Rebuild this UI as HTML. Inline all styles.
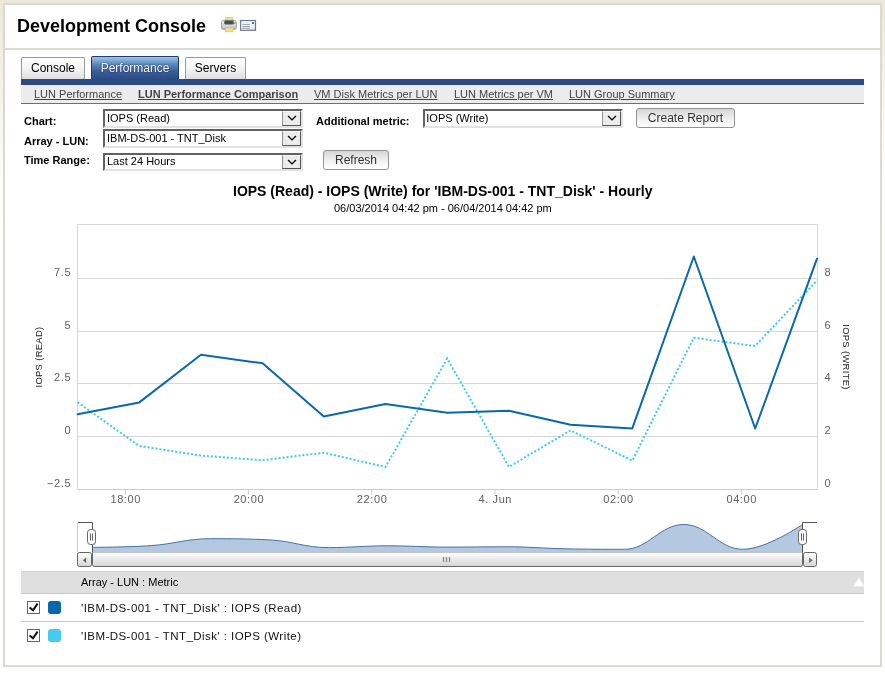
<!DOCTYPE html>
<html><head><meta charset="utf-8">
<style>
*{box-sizing:border-box;margin:0;padding:0}
html,body{width:885px;height:674px;overflow:hidden}
#wrap{position:absolute;left:0;top:0;width:885px;height:674px;will-change:transform}
body{position:relative;font-family:"Liberation Sans",sans-serif;background:linear-gradient(to bottom,#ebe8da 0px,#f3f1e8 80px,#fdfdfb 180px,#ffffff 240px);color:#000}
.a{position:absolute;white-space:nowrap}
#box{position:absolute;left:3px;top:3px;width:879px;height:664px;border:2px solid #dbdad2;background:#fff}
#hdrline{position:absolute;left:5px;top:48px;width:875px;height:2px;background:#dbdad2}
.title{left:17px;top:15px;font-size:18px;font-weight:bold;line-height:22px}
.tab{position:absolute;top:57px;height:22px;border:1px solid #9a9a9a;border-bottom:none;border-radius:2px 2px 0 0;background:linear-gradient(to bottom,#ffffff 0%,#f4f4f4 50%,#dedede 100%);font-size:12px;line-height:21px;text-align:center;color:#000}
.tab.on{top:56px;height:23px;line-height:23px;border-color:#1e3a6e;background:linear-gradient(to bottom,#9cc4e8 0%,#5a84bc 35%,#3a5e98 65%,#2d4c86 100%);color:#fff;text-shadow:0 0 1px #0f2448,0 0 1px #0f2448}
#bar{position:absolute;left:21px;top:79px;width:843px;height:6px;background:#2c4b84}
#sub{position:absolute;left:21px;top:85px;width:843px;height:19px;background:#ececec;border-bottom:1px solid #60718f}
.lnk{font-size:11px;color:#444;text-decoration:underline;top:88px;line-height:13px}
.lbl{font-size:11px;font-weight:bold;line-height:13px}
.sel{position:absolute;width:200px;height:19px;border:2px solid;border-color:#626262 #e2e2e2 #e2e2e2 #626262;background:#fff;font-size:11px;line-height:14px;padding-left:2px}
.sel .t{position:absolute;left:2px;top:0px}
.sel .b{position:absolute;right:0;top:0;width:19px;height:15px;background:#ececec;border-style:solid;border-width:1px;border-color:#f8f8f8 #555 #555 #909090}
.btn{position:absolute;height:20px;border:1px solid #939393;border-radius:3px;background:linear-gradient(to bottom,#d6d6d6 0%,#eeeeee 50%,#fafafa 80%,#ffffff 100%);font-size:12px;color:#333;text-align:center;line-height:18px}
.ct{font-size:14px;font-weight:bold;line-height:16px}
.cs{font-size:11px;line-height:13px}
.yl{font-size:11px;color:#606060;line-height:13px}
#lgh{position:absolute;left:21px;top:571px;width:843px;height:23px;background:#dfdfdf;border-top:1px solid #cfcfcf;border-bottom:1px solid #c8c8c8}
.sep{position:absolute;left:21px;top:621px;width:843px;height:1px;background:#c8c8c8}
.cb{position:absolute;width:13px;height:13px;border:1px solid #666;background:#fff}
.sw{position:absolute;width:13px;height:13px;border-radius:3px}
.lt{font-size:11.5px;line-height:14px;color:#111;letter-spacing:0.45px}
</style></head><body><div id="wrap">
<div id="box"></div>
<div id="hdrline"></div>
<div class="a title">Development Console</div>

<!-- icons -->
<svg class="a" style="left:220px;top:16px" width="40" height="18" viewBox="0 0 40 18">
  <defs><linearGradient id="pb" x1="0" y1="0" x2="0" y2="1"><stop offset="0" stop-color="#f2f2f5"/><stop offset="0.6" stop-color="#d4d7dd"/><stop offset="1" stop-color="#a9adb5"/></linearGradient>
  <linearGradient id="eg" x1="0" y1="0" x2="1" y2="1"><stop offset="0" stop-color="#ffffff"/><stop offset="0.6" stop-color="#fafafb"/><stop offset="1" stop-color="#d6d8dc"/></linearGradient></defs>
  <rect x="5.5" y="1.5" width="7.5" height="4" fill="#f5e18e" stroke="#e8c95e" stroke-width="0.8"/>
  <rect x="1.5" y="4.3" width="14.8" height="9.2" rx="2.2" fill="url(#pb)" stroke="#8d9199" stroke-width="0.8"/>
  <rect x="4.3" y="4.5" width="9.4" height="3.9" rx="1.2" fill="#4b4e54"/>
  <rect x="14" y="6" width="1.4" height="1" fill="#66cc66"/>
  <rect x="14" y="7" width="1.4" height="1" fill="#e07070"/>
  <rect x="5.5" y="12" width="7.5" height="3.8" fill="#f0e08e" stroke="#e2c560" stroke-width="0.8"/>
  <rect x="20.7" y="4.5" width="14.8" height="9.8" fill="url(#eg)" stroke="#6b7a92" stroke-width="1.2"/>
  <rect x="32" y="6" width="2" height="2" fill="#2f6ee6"/>
  <path d="M22.3 6.5 H30.5" stroke="#e6e9f0" stroke-width="0.8"/>
  <path d="M22.3 8.4 H30 M22.3 10.5 H30 M22.3 12.3 H30" stroke="#8e9299" stroke-width="0.9"/>
</svg>

<!-- tabs -->
<div class="tab" style="left:21px;width:64px">Console</div>
<div class="tab on" style="left:91px;width:88px">Performance</div>
<div class="tab" style="left:185px;width:61px">Servers</div>
<div id="bar"></div>
<div id="sub"></div>
<div class="a lnk" style="left:34px">LUN Performance</div>
<div class="a lnk" style="left:138px;font-weight:bold">LUN Performance Comparison</div>
<div class="a lnk" style="left:314px">VM Disk Metrics per LUN</div>
<div class="a lnk" style="left:454px">LUN Metrics per VM</div>
<div class="a lnk" style="left:569px">LUN Group Summary</div>

<!-- form -->
<div class="a lbl" style="left:24px;top:115px">Chart:</div>
<div class="a lbl" style="left:24px;top:135px">Array - LUN:</div>
<div class="a lbl" style="left:24px;top:154px">Time Range:</div>
<div class="sel" style="left:103px;top:109px"><span class="t">IOPS (Read)</span><span class="b"><svg style="position:absolute;left:4px;top:3px" width="10" height="8" viewBox="0 0 10 8"><path d="M1.1 1 L5 4.9 L8.9 1" stroke="#000" stroke-width="1.35" fill="none"/></svg></span></div>
<div class="sel" style="left:103px;top:129px"><span class="t">IBM-DS-001 - TNT_Disk</span><span class="b"><svg style="position:absolute;left:4px;top:3px" width="10" height="8" viewBox="0 0 10 8"><path d="M1.1 1 L5 4.9 L8.9 1" stroke="#000" stroke-width="1.35" fill="none"/></svg></span></div>
<div class="sel" style="left:103px;top:153px;height:18px"><span class="t" style="top:-1px">Last 24 Hours</span><span class="b" style="height:14px"><svg style="position:absolute;left:4px;top:3px" width="10" height="8" viewBox="0 0 10 8"><path d="M1.1 1 L5 4.9 L8.9 1" stroke="#000" stroke-width="1.35" fill="none"/></svg></span></div>
<div class="a lbl" style="left:316px;top:115px">Additional metric:</div>
<div class="sel" style="left:423px;top:109px"><span class="t" style="left:1.3px">IOPS (Write)</span><span class="b"><svg style="position:absolute;left:4px;top:3px" width="10" height="8" viewBox="0 0 10 8"><path d="M1.1 1 L5 4.9 L8.9 1" stroke="#000" stroke-width="1.35" fill="none"/></svg></span></div>
<div class="btn" style="left:636px;top:108px;width:99px">Create Report</div>
<div class="btn" style="left:323px;top:150px;width:66px">Refresh</div>

<!-- chart titles -->
<div class="a ct" style="left:233px;top:183px">IOPS (Read) - IOPS (Write) for 'IBM-DS-001 - TNT_Disk' - Hourly</div>
<div class="a cs" style="left:334px;top:202px">06/03/2014 04:42 pm - 06/04/2014 04:42 pm</div>

<!-- chart -->
<svg class="a" style="left:0;top:0" width="885" height="674" viewBox="0 0 885 674">
<defs><linearGradient id="sg" x1="0" y1="0" x2="0" y2="1"><stop offset="0" stop-color="#ffffff"/><stop offset="1" stop-color="#d4d4d4"/></linearGradient></defs>
<path d="M77.5 278.5 H817.5" stroke="#d8d8d8" stroke-width="1" fill="none"/>
<path d="M77.5 331.5 H817.5" stroke="#d8d8d8" stroke-width="1" fill="none"/>
<path d="M77.5 383.5 H817.5" stroke="#d8d8d8" stroke-width="1" fill="none"/>
<path d="M77.5 436.5 H817.5" stroke="#d8d8d8" stroke-width="1" fill="none"/>
<path d="M77.5 489.5 V224.5 H817.5 V489.5" stroke="#d8d8d8" stroke-width="1" fill="none"/>
<path d="M77.5 489.5 H817.5" stroke="#c0d0e0" stroke-width="1" fill="none"/>
<path d="M125.4 489.5 V494.5" stroke="#c0d0e0" stroke-width="1" fill="none"/>
<path d="M248.6 489.5 V494.5" stroke="#c0d0e0" stroke-width="1" fill="none"/>
<path d="M371.8 489.5 V494.5" stroke="#c0d0e0" stroke-width="1" fill="none"/>
<path d="M495.0 489.5 V494.5" stroke="#c0d0e0" stroke-width="1" fill="none"/>
<path d="M618.2 489.5 V494.5" stroke="#c0d0e0" stroke-width="1" fill="none"/>
<path d="M741.4 489.5 V494.5" stroke="#c0d0e0" stroke-width="1" fill="none"/>
<g font-family="Liberation Sans" font-size="11" fill="#606060" letter-spacing="0.6">
<text x="125.7" y="502.7" text-anchor="middle">18:00</text>
<text x="248.9" y="502.7" text-anchor="middle">20:00</text>
<text x="372.1" y="502.7" text-anchor="middle">22:00</text>
<text x="495.3" y="502.7" text-anchor="middle">4. Jun</text>
<text x="618.5" y="502.7" text-anchor="middle">02:00</text>
<text x="741.7" y="502.7" text-anchor="middle">04:00</text>
<text x="71.2" y="276.1" text-anchor="end">7.5</text>
<text x="71.2" y="329.1" text-anchor="end">5</text>
<text x="71.2" y="381.1" text-anchor="end">2.5</text>
<text x="71.2" y="434.1" text-anchor="end">0</text>
<text x="71.2" y="487.1" text-anchor="end">−2.5</text>
<text x="824.5" y="276.1">8</text>
<text x="824.5" y="329.1">6</text>
<text x="824.5" y="381.1">4</text>
<text x="824.5" y="434.1">2</text>
<text x="824.5" y="487.1">0</text>
</g>
<text x="0" y="0" transform="translate(42.2 357) rotate(-90)" text-anchor="middle" font-family="Liberation Sans" font-size="9.4" letter-spacing="0.35" fill="#222">IOPS (READ)</text>
<text x="0" y="0" transform="translate(842.6 357) rotate(90)" text-anchor="middle" font-family="Liberation Sans" font-size="9.4" letter-spacing="0.35" fill="#222">IOPS (WRITE)</text>
<path d="M77.6 402.2 L139.3 446.0 L201.0 455.6 L262.6 460.3 L323.8 452.7 L385.5 467.0 L447.2 358.5 L509.0 466.9 L570.5 430.4 L632.3 460.6 L693.8 337.8 L755.2 346.0 L817.0 280.5" stroke="#3ccbee" stroke-width="2" stroke-dasharray="2,2" fill="none" stroke-linejoin="miter"/>
<path d="M77.6 414.3 L139.3 402.4 L201.0 354.8 L262.6 363.3 L323.8 416.6 L385.5 404.1 L447.2 412.8 L509.0 410.8 L570.5 424.8 L632.3 428.4 L693.8 256.5 L755.2 428.5 L817.0 258.7" stroke="#0a68ac" stroke-width="2" fill="none" stroke-linejoin="round" stroke-linecap="round"/>
<path d="M92.0 547.3 C92.0 547.3 127.5 547.3 151.2 545.6 C174.9 543.9 186.8 538.7 210.5 538.7 C234.2 538.7 246.0 538.7 269.6 539.9 C293.2 541.2 304.9 547.6 328.4 547.6 C352.1 547.6 364.0 545.8 387.7 545.8 C411.4 545.8 423.2 547.1 446.9 547.1 C470.6 547.1 482.5 546.8 506.2 546.8 C529.9 546.8 541.7 548.3 565.3 548.8 C589.0 549.3 600.9 549.3 624.6 549.3 C648.3 549.3 660.1 524.5 683.7 524.5 C707.3 524.5 719.1 549.3 742.7 549.3 C766.4 549.3 802.0 524.8 802.0 524.8 L802.0 552 L92.0 552 Z" fill="#b4c8e0" stroke="none"/>
<path d="M92.0 547.3 C92.0 547.3 127.5 547.3 151.2 545.6 C174.9 543.9 186.8 538.7 210.5 538.7 C234.2 538.7 246.0 538.7 269.6 539.9 C293.2 541.2 304.9 547.6 328.4 547.6 C352.1 547.6 364.0 545.8 387.7 545.8 C411.4 545.8 423.2 547.1 446.9 547.1 C470.6 547.1 482.5 546.8 506.2 546.8 C529.9 546.8 541.7 548.3 565.3 548.8 C589.0 549.3 600.9 549.3 624.6 549.3 C648.3 549.3 660.1 524.5 683.7 524.5 C707.3 524.5 719.1 549.3 742.7 549.3 C766.4 549.3 802.0 524.8 802.0 524.8" fill="none" stroke="#4572a7" stroke-width="1"/>
<path d="M77.5 552.5 V522.5" stroke="#cccccc" stroke-width="1" fill="none"/>
<path d="M78 522.5 H92.5 V552.5 M802.5 552.5 V522.5 H817" stroke="#555" stroke-width="1" fill="none"/>
<rect x="87.5" y="529.5" width="8" height="15" rx="3" fill="#fafafa" stroke="#666" stroke-width="1"/>
<path d="M90.5 533.5 V540.5 M92.5 533.5 V540.5" stroke="#666" stroke-width="1" fill="none"/>
<rect x="798.5" y="529.5" width="8" height="15" rx="3" fill="#fafafa" stroke="#666" stroke-width="1"/>
<path d="M801.5 533.5 V540.5 M803.5 533.5 V540.5" stroke="#666" stroke-width="1" fill="none"/>
<rect x="92.5" y="552.5" width="710" height="14" fill="url(#sg)"/>
<path d="M92.5 552.5 H802.5" stroke="#c4c4c4" stroke-width="1" fill="none"/>
<path d="M92.5 552.5 V564.5 Q92.5 566.5 94.5 566.5 H800.5 Q802.5 566.5 802.5 564.5 V552.5" stroke="#666" stroke-width="1" fill="none"/>
<rect x="77.5" y="552.5" width="14" height="14" rx="2" fill="url(#sg)" stroke="#666" stroke-width="1"/>
<rect x="803.5" y="552.5" width="13" height="14" rx="2" fill="url(#sg)" stroke="#666" stroke-width="1"/>
<path d="M86.2 557.5 L82.8 560.2 L86.2 563 Z M809.2 557.5 L812.6 560.2 L809.2 563 Z" fill="#666"/>
<path d="M443.5 557 V562 M446.5 557 V562 M449.5 557 V562" stroke="#888" stroke-width="1.3" fill="none"/>
</svg>
<!-- legend -->
<div id="lgh"></div>
<div class="a" style="left:81px;top:576px;font-size:11px;line-height:13px;color:#000">Array - LUN : Metric</div>
<div class="sep"></div>
<svg class="a" style="left:853px;top:577px" width="11" height="10" viewBox="0 0 11 10"><path d="M0.5 9.5 L6 0.5 L11.5 9.5 Z" fill="#fff"/></svg>
<div class="cb" style="left:27px;top:601px"><svg style="position:absolute;left:1px;top:1px" width="11" height="11" viewBox="0 0 11 11"><path d="M0.6 4.4 L4 7.3 L8.6 0.6" stroke="#111" stroke-width="2" fill="none"/></svg></div>
<div class="sw" style="left:48px;top:601px;background:#0568aa"></div>
<div class="a lt" style="left:81px;top:601px">'IBM-DS-001 - TNT_Disk' : IOPS (Read)</div>
<div class="cb" style="left:27px;top:629px"><svg style="position:absolute;left:1px;top:1px" width="11" height="11" viewBox="0 0 11 11"><path d="M0.6 4.4 L4 7.3 L8.6 0.6" stroke="#111" stroke-width="2" fill="none"/></svg></div>
<div class="sw" style="left:48px;top:629px;background:#44ccee"></div>
<div class="a lt" style="left:81px;top:629px">'IBM-DS-001 - TNT_Disk' : IOPS (Write)</div>

</div></body></html>
